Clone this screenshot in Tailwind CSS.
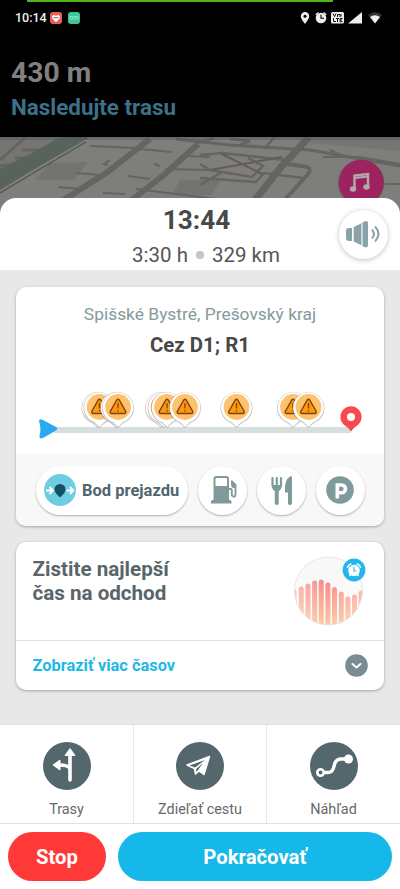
<!DOCTYPE html>
<html lang="sk">
<head>
<meta charset="utf-8">
<title>Trasa</title>
<script src="https://cdn.jsdelivr.net/npm/@tailwindcss/browser@4"></script>
</head>
<body class="w-[400px] h-[889px] overflow-hidden bg-[#e8e8e8] font-[Roboto,sans-serif]">
<div class="flex flex-col h-[889px]">
  <header class="relative h-[137px] shrink-0 bg-black">
    <div class="absolute left-[27px] top-0 w-[306px] h-[2px] bg-[#4fb41c]"></div>
    <div class="flex items-center justify-between h-[36px] pl-[15px] pr-[18px]">
      <div class="flex items-center">
        <span class="text-[12.500px] font-medium text-[#f0f0f0] w-[35px] whitespace-nowrap">10:14</span>
        <svg class="w-3 h-3 block" viewBox="0 0 12 12"><rect width="12" height="12" rx="3" fill="#e85f58"/><path d="M6 10C3 8 2 6.500 2 4.800C2 3 4.500 2 6 4C7.500 2 10 3 10 4.800C10 6.500 9 8 6 10Z" fill="#fff"/><path d="M3.500 5.500L5 6L6 5L7 6L8.500 5.500" stroke="#333" stroke-width=".7" fill="none"/></svg>
        <svg class="w-3 h-3 block ml-[6px]" viewBox="0 0 12 12"><rect width="12" height="12" rx="3" fill="#3cc795"/><path d="M2 4.500H5V7H2ZM6 4.500H7.500V7H6M8.500 4.500H10V7H8.500" stroke="#a7ead0" stroke-width=".8" fill="none"/></svg>
      </div>
      <svg class="w-[82px] h-[14px] block" viewBox="300 11 82 14">
        <path d="M305 12A4.200 4.200 0 0 0 300.800 16.200C300.800 19 305 23.800 305 23.800S309.200 19 309.200 16.200A4.200 4.200 0 0 0 305 12Z" fill="#eee"/><circle cx="305" cy="16.200" r="1.500" fill="#000"/>
        <circle cx="321" cy="18" r="5.300" fill="#eee"/><path d="M315.800 14.700L318.500 12.500M326.200 14.700L323.500 12.500" stroke="#eee" stroke-width="1.400"/><path d="M321 14.800V18.300H324" stroke="#000" stroke-width="1.100" fill="none"/>
        <rect x="331" y="12" width="13" height="11.500" rx="1.500" fill="#eee"/>
        <path d="M333 13.500L334.500 16.700L336 13.500M337.500 17V14.500H340V17M341 14V16.500M333.500 18V21.500H336M336 18.500H339M337.500 18.500V22M342.500 18.500H340V21.700H342.500M340 20H342" stroke="#111" stroke-width="1" fill="none"/>
        <path d="M348 23.500L362 12V23.500Z" fill="#eee"/>
        <path d="M368 15Q375 9.500 382 15L375 23.500Z" fill="#333"/><path d="M370 17Q375 13.500 380 17L375 23.500Z" fill="#eee"/>
      </svg>
    </div>
    <div class="pl-[11px] pt-[20px]">
      <div class="text-[28.300px] leading-[34px] font-bold text-[#808080]">430 m</div>
      <div class="text-[22.400px] leading-[34px] font-bold text-[#3c7189] whitespace-nowrap">Nasledujte trasu</div>
    </div>
  </header>

  <div class="relative h-[61px] shrink-0 bg-[#7d7d7c]">
    <svg class="absolute left-0 top-0 w-[400px] h-[90px]" viewBox="0 137 400 90">
      <rect y="137" width="400" height="90" fill="#7e7e7d"/>
      <path d="M0 137H72L50 152L0 180ZM310 137H400V151L310 143Z" fill="#757572"/>
      <path d="M50 163L88 162L74 180L35 180ZM180 180H220L212 195H172Z" fill="#737371"/>
      <g fill="none" stroke="#65655f" stroke-width="3">
        <path d="M0 160L26 137M0 176L40 151L70 137M15 158H42M22 150H55M0 166L20 163"/>
        <path d="M150 139L106 173L62 201" stroke-width="6"/>
        <path d="M198 144L165 174L124 206" stroke-width="6"/>
        <path d="M136 189L240 202M140 149L172 152M90 146L135 148M76 173L100 175M58 187L82 189M128 176L150 179M103 193L125 194M165 169L210 170M188 156L210 157M154 164L160 166M110 160L104 164L108 165" stroke-width="2"/>
        <path d="M176 139L230 145L310 150L400 166" stroke-width="3"/>
        <path d="M309 137L281 167L251 205" stroke-width="7"/>
        <path d="M288 164L307 167Q312 169 308 174L280 205" stroke-width="4"/>
        <path d="M214 138L198 143M230 139L250 141L240 145M275 137L264 149M200 155L222 153L285 160M200 164L210 170L252 177L263 166L248 158M200 178L256 182L264 173L303 178M222 172L200 185" stroke-width="2.500"/>
        <path d="M222 154L262 174M210 170L282 157" stroke="#655b54" stroke-width="2"/>
        <path d="M323 157H360L400 164M330 150L345 157M385 184H400" stroke-width="2"/>
      </g>
      <path d="M90 137L38 167L0 190V169L36 151L60 137Z" fill="#58635d"/>
      <path d="M86 142L30 175L0 193" stroke="#50534f" stroke-width="1.200" fill="none"/>
      <rect y="137" width="400" height="3" fill="#555" opacity=".45"/>
      <circle cx="361" cy="183" r="23.500" fill="#5d5d59" opacity=".6"/>
      <circle cx="361.300" cy="182.300" r="22.500" fill="#9c2360"/>
      <path d="M354.500 189V175.500L368 174V187" fill="none" stroke="#b4a8ae" stroke-width="2.400"/><path d="M354.500 178L368 176.500" stroke="#b4a8ae" stroke-width="2"/>
      <ellipse cx="353" cy="189" rx="3.200" ry="2.700" fill="#b4a8ae"/><ellipse cx="366.500" cy="187" rx="3.200" ry="2.700" fill="#b4a8ae"/>
    </svg>
  </div>

  <section class="relative h-[72px] shrink-0 bg-white rounded-t-[16px] text-center z-10">
    <div class="pt-[6px] -ml-[7px] text-[26.200px] leading-[32px] font-bold text-[#484848]">13:44</div>
    <div class="flex justify-center items-center mt-[7px] pl-[12px] text-[20.5px] leading-[24px] text-[#555]">
      <span>3:30 h</span><span class="w-[8px] h-[8px] mx-[8px] rounded-full bg-[#bcc7d0]"></span><span>329 km</span>
    </div>
    <div class="absolute left-[339px] top-[12px] w-[49px] h-[49px] rounded-full bg-white shadow-[0_1px_5px_rgba(0,0,0,0.25)]">
      <svg class="block w-[49px] h-[49px]" viewBox="339 210 49 49"><path d="M352 228V241H349Q346 241 346 238V231Q346 228 349 228ZM353.700 227L361 223.500V245L353.700 241.500ZM362.500 222.800L364 221.500Q368 220 368 223V245Q368 248.500 364 247L362.500 246.200Z" fill="#8ca2aa"/><path d="M361 223.500L362.500 222.800V246.200L361 245Z" fill="#cdd7da"/><path d="M372 229.500Q376 234 372 238.500M375 226.500Q382 234 375 241.500" fill="none" stroke="#8ca2aa" stroke-width="2"/></svg>
    </div>
  </section>

  <main class="h-[454px] shrink-0 px-4 pt-[17px]">
    <section class="h-[239px] rounded-[10px] bg-white overflow-hidden shadow-[0_1px_3px_rgba(0,0,0,0.3)]">
      <div class="h-[167px] pt-[15px] text-center">
        <div class="text-[17.400px] leading-[24px] text-[#839b9b] whitespace-nowrap">Spišské Bystré, Prešovský kraj</div>
        <div class="mt-[7px] text-[20.400px] leading-[24px] font-bold text-[#484848]">Cez D1; R1</div>
        <svg class="block mt-[17px] w-[368px] h-[70px]" viewBox="16 374 368 70">
          <defs>
            <g id="pin">
              <path d="M0 20.500L-5.500 15.500A16 16 0 1 1 5.500 15.500Z" fill="#777" opacity=".45" transform="translate(0 .5)"/>
              <path d="M0 20L-5 15A15.300 15.300 0 1 1 5 15Z" fill="#fff"/>
              <circle r="12.900" fill="#fcc26d"/>
              <path d="M-1.200 -7Q0 -8.500 1.200 -7L7.700 4.500Q8.200 6.500 6.500 6.500H-6.500Q-8.200 6.500 -7.700 4.500Z" fill="#f99a10" stroke="#873f0a" stroke-width="1.400"/>
              <path d="M0 -4V1.500M0 3V4.500" stroke="#873f0a" stroke-width="1.300"/>
            </g>
          </defs>
          <path d="M54 430H351" stroke="#d6dede" stroke-width="6"/>
          <path d="M39 421Q39 418 43 420L56 427Q58.500 428.700 56 430.500L43 438Q39 439.500 39.500 436Q41.500 429 39 421Z" fill="#2aa9f3"/>
          <use href="#pin" x="97.500" y="407"/><use href="#pin" x="99.500" y="407"/><use href="#pin" x="116" y="407"/><use href="#pin" x="118" y="407"/>
          <use href="#pin" x="161" y="407"/><use href="#pin" x="163.500" y="407"/><use href="#pin" x="167" y="407"/><use href="#pin" x="185" y="407"/>
          <use href="#pin" x="236.500" y="407"/><use href="#pin" x="293" y="407"/><use href="#pin" x="308.500" y="407"/>
          <path d="M351 431.500Q349 428 345.500 426A10.600 10.600 0 1 1 356.500 426Q353 428 351 431.500Z" fill="#f8494f"/><circle cx="351" cy="417" r="4" fill="#fff"/>
        </svg>
      </div>
      <div class="h-[72px] bg-[#f8f8f8] flex items-center pl-5 gap-[10px]">
        <div class="w-[152px] h-[49px] rounded-full bg-white shadow-[0_1px_2px_rgba(0,0,0,0.3)] flex items-center pl-[8px] text-[16.500px] font-bold text-[#50656d] whitespace-nowrap">
          <svg class="w-8 h-8 mr-[6px] shrink-0" viewBox="0 0 32 32"><circle cx="16" cy="16" r="16" fill="#6fcce2"/><path d="M16 23.500C12.500 20 10.500 18 10.500 15.500A5.500 5.500 0 0 1 21.500 15.500C21.500 18 19.500 20 16 23.500Z" fill="#135067"/><path d="M2 16.500H8.500M5.500 13L9 16.500L5.500 20M22.500 16.500H29M26 13L29.500 16.500L26 20" stroke="#fff" stroke-width="1.800" fill="none"/></svg><span class="pt-[2px]">Bod prejazdu</span>
        </div>
        <div class="w-[49px] h-[49px] rounded-full bg-white shadow-[0_1px_2px_rgba(0,0,0,0.3)]"><svg class="block w-[49px] h-[49px]" viewBox="198 466 49 49"><path fill-rule="evenodd" d="M213.500 500V479Q213.500 476 216.500 476H226Q229 476 229 479V500H230Q231.500 500 231.500 502V503.500H211V502Q211 500 212.500 500ZM216.500 478Q215.500 478 215.500 479V486H227V479Q227 478 226 478Z" fill="#7f9a9b"/><path d="M229 489H231Q231.800 489 231.800 491V495.500Q235.500 498.500 235.500 494V485L231.500 481" fill="none" stroke="#7f9a9b" stroke-width="1.900"/><path d="M231 480L235.500 484.500V488H233Q231 487 231 484Z" fill="#7f9a9b"/></svg></div>
        <div class="w-[49px] h-[49px] rounded-full bg-white shadow-[0_1px_2px_rgba(0,0,0,0.3)]"><svg class="block w-[49px] h-[49px]" viewBox="257 466 49 49"><path d="M272.500 478V485Q272.500 488.500 276.800 488.500T281 485V478M276.800 478V488" fill="none" stroke="#7f9a9b" stroke-width="2.200" stroke-linecap="round"/><path d="M272 485H281.500Q281.500 490 278.700 491V504Q276.800 506 274.800 504V491Q272 490 272 485Z" fill="#7f9a9b"/><path d="M288 504V492.500H285Q284 480 290.500 476Q292 476 292 478V504Q290 506 288 504Z" fill="#7f9a9b"/></svg></div>
        <div class="w-[49px] h-[49px] rounded-full bg-white shadow-[0_1px_2px_rgba(0,0,0,0.3)]"><svg class="block w-[49px] h-[49px]" viewBox="316 466 49 49"><circle cx="340" cy="490" r="13.800" fill="#7f9a9b"/><path d="M337.300 498.500V485H341.500A3.700 3.700 0 0 1 341.500 492.800H337.300" fill="none" stroke="#fff" stroke-width="3.600"/></svg></div>
      </div>
    </section>

    <section class="mt-4 h-[148px] rounded-[10px] bg-white shadow-[0_1px_3px_rgba(0,0,0,0.3)]">
      <div class="h-[99px] border-b border-[#e2e2e2] flex justify-between pl-[16.5px] pr-[17px]">
        <div class="pt-[15px] text-[20.600px] leading-[24px] font-bold text-[#58666c] whitespace-nowrap">Zistite najlepší<br>čas na odchod</div>
        <svg class="block mt-[13px] w-[74px] h-[74px]" viewBox="293 555 74 74">
          <defs><clipPath id="disc"><circle cx="328.500" cy="591" r="34"/></clipPath><linearGradient id="heat" gradientUnits="userSpaceOnUse" x1="0" y1="580" x2="0" y2="625"><stop stop-color="#f78684"/><stop offset="1" stop-color="#fbc9a0"/></linearGradient><linearGradient id="fade" x1="0" x2="1"><stop stop-color="#fff" stop-opacity=".4"/><stop offset=".45" stop-color="#fff" stop-opacity="0"/><stop offset="1" stop-color="#fff" stop-opacity=".35"/></linearGradient></defs>
          <circle cx="328.500" cy="591" r="34" fill="#f8f8f8"/>
          <g clip-path="url(#disc)"><path d="M294 592V630M301.200 589V630M307.900 586V630M314.600 583V630M321.200 582V630M327.900 585V630M334.500 589.500V630M341.300 594V630M347.900 599V630M354.500 597V630M361.200 593V630" stroke="url(#heat)" stroke-width="5" stroke-linecap="round"/><rect x="294" y="580" width="70" height="50" fill="url(#fade)"/></g>
          <circle cx="328.500" cy="591" r="34" fill="none" stroke="#e8e7e5"/>
          <circle cx="354" cy="570" r="11.400" fill="#24b5ec"/><circle cx="354" cy="570.500" r="5.800" fill="#fff"/><path d="M347.500 568Q348 564.500 351.500 564M360.500 568Q360 564.500 356.500 564M350.500 574.500L349.500 576M357.500 574.500L358.500 576" stroke="#fff" stroke-width="1.400" fill="none"/><path d="M354 567V571H356.500" stroke="#24b5ec" stroke-width="1.100" fill="none"/>
        </svg>
      </div>
      <div class="h-[49px] flex items-center justify-between pl-[16.5px] pr-4">
        <span class="text-[16.400px] pt-[2px] font-bold text-[#1eb8e8]">Zobraziť viac časov</span>
        <svg class="w-[23px] h-[23px]" viewBox="0 0 23 23"><circle cx="11.500" cy="11.500" r="11.300" fill="#7a8b93"/><path d="M7.500 10L11.500 13.500L15.500 10" fill="none" stroke="#fff" stroke-width="2" stroke-linecap="round"/></svg>
      </div>
    </section>
  </main>

  <nav class="h-[100px] shrink-0 bg-white border-y border-[#e2e2e2] grid grid-cols-[134px_133px_133px] text-[14.400px] leading-[20px] text-[#686868] text-center">
    <div class="flex flex-col items-center pt-[17px] border-r border-[#e8e8e8]">
      <svg class="w-12 h-12 shrink-0" viewBox="42 742 48 48"><circle cx="66" cy="766" r="24" fill="#54676d"/><path d="M69 780V753M69 768Q66 765 59 765" fill="none" stroke="#fff" stroke-width="3.600" stroke-linecap="round"/><path d="M69 748.500L74 755.500H64ZM52 765L59 760V770Z" fill="#fff" stroke="#fff" stroke-linejoin="round"/></svg>
      <span class="mt-[10px]">Trasy</span>
    </div>
    <div class="flex flex-col items-center pt-[17px] border-r border-[#e8e8e8]">
      <svg class="w-12 h-12 shrink-0" viewBox="176 742 48 48"><circle cx="200" cy="766" r="24" fill="#54676d"/><path d="M187 765L209.500 756.500L204 774.500L199 771L195.500 774L194.500 768.500Z" fill="#fff" stroke="#fff" stroke-width="1.500" stroke-linejoin="round"/><path d="M189.500 765.500L205 760L195 767.500ZM196.200 772V769L203 763L198 770Z" fill="#54676d"/></svg>
      <span class="mt-[10px]">Zdieľať cestu</span>
    </div>
    <div class="flex flex-col items-center pt-[17px]">
      <svg class="w-12 h-12 shrink-0" viewBox="310 742 48 48"><circle cx="334" cy="766" r="24" fill="#54676d"/><path d="M321 772.500H328Q332 772.500 333.500 768L335 763Q337 759 341 759H347" fill="none" stroke="#fff" stroke-width="3.400"/><circle cx="320.500" cy="772.500" r="3.200" fill="#54676d" stroke="#fff" stroke-width="2.600"/><circle cx="348.500" cy="759" r="4.500" fill="#fff"/></svg>
      <span class="mt-[10px]">Náhľad</span>
    </div>
  </nav>

  <footer class="flex-1 bg-white flex items-start gap-3 px-2 pt-[8px] text-[20.300px] font-bold text-white">
    <button class="w-[98px] h-[49px] rounded-full bg-[#ff3838] pt-[2px]">Stop</button>
    <button class="w-[274px] h-[49px] rounded-full bg-[#16b7e9] pt-[2px]">Pokračovať</button>
  </footer>
</div>
</body>
</html>
